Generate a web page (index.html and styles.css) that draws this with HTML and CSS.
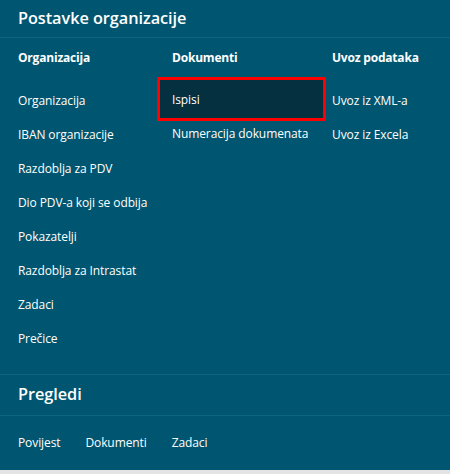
FILE: index.html
```html
<!DOCTYPE html>
<html>
<head>
<meta charset="utf-8">
<link rel="stylesheet" href="styles.css">
</head>
<body>
<div class="panel">
  <div class="section-head"><h2 class="title">Postavke organizacije</h2></div>
  <div class="columns">
    <div class="col col1">
      <div class="col-title">Organizacija</div>
      <a class="link">Organizacija</a>
      <a class="link">IBAN organizacije</a>
      <a class="link">Razdoblja za PDV</a>
      <a class="link">Dio PDV-a koji se odbija</a>
      <a class="link">Pokazatelji</a>
      <a class="link">Razdoblja za Intrastat</a>
      <a class="link">Zadaci</a>
      <a class="link">Prečice</a>
    </div>
    <div class="col col2">
      <div class="col-title">Dokumenti</div>
      <a class="link active">Ispisi</a>
      <a class="link after-active">Numeracija dokumenata</a>
    </div>
    <div class="col col3">
      <div class="col-title">Uvoz podataka</div>
      <a class="link">Uvoz iz XML-a</a>
      <a class="link">Uvoz iz Excela</a>
    </div>
  </div>
  <div class="section-head second"><h2 class="title">Pregledi</h2></div>
  <div class="row-links">
    <a class="link">Povijest</a>
    <a class="link">Dokumenti</a>
    <a class="link">Zadaci</a>
  </div>
</div>
</body>
</html>
```

FILE: styles.css
```css
html, body {
  margin: 0;
  padding: 0;
  background: #e3e3e3;
}
body {
  font-family: "Open Sans", "DejaVu Sans", sans-serif;
  color: #fff;
  width: 450px;
  height: 474px;
  overflow: hidden;
}
.panel {
  background: #005670;
}
.section-head {
  height: 38px;
  border-bottom: 1px solid #0b6580;
  box-sizing: border-box;
  padding-left: 18px;
  padding-bottom: 2px;
  display: flex;
  align-items: center;
}
.section-head.second {
  border-top: 1px solid #0b6580;
  height: 42px;
  padding-bottom: 3px;
}
.title {
  margin: 0;
  font-size: 16.3px;
  font-weight: 600;
  letter-spacing: -0.05px;
}
.columns {
  display: grid;
  grid-template-columns: 154px 160px 1fr;
  padding: 0 0 18px 18px;
}
.col {
  display: flex;
  flex-direction: column;
}
.col-title {
  font-size: 12px;
  font-weight: 700;
  letter-spacing: -0.2px;
  height: 39px;
  line-height: 39px;
  margin-bottom: 1px;
}
.link {
  font-size: 12px;
  letter-spacing: -0.1px;
  height: 34px;
  line-height: 34px;
  display: block;
  color: #fff;
  white-space: nowrap;
}
.col1 .link:first-of-type, .col3 .link:first-of-type {
  margin-top: 6px;
}
.link.active {
  background: #04303f;
  border: 3px solid #ff0000;
  margin-left: -15px;
  padding-left: 12px;
  padding-top: 1px;
  height: 37px;
  line-height: 38px;
  margin-top: -1px;
  width: 151px;
}
.link.after-active {
  margin-top: -4px;
}
.row-links {
  display: flex;
  gap: 25px;
  padding: 0 18px;
  height: 54px;
  align-items: center;
}
```
